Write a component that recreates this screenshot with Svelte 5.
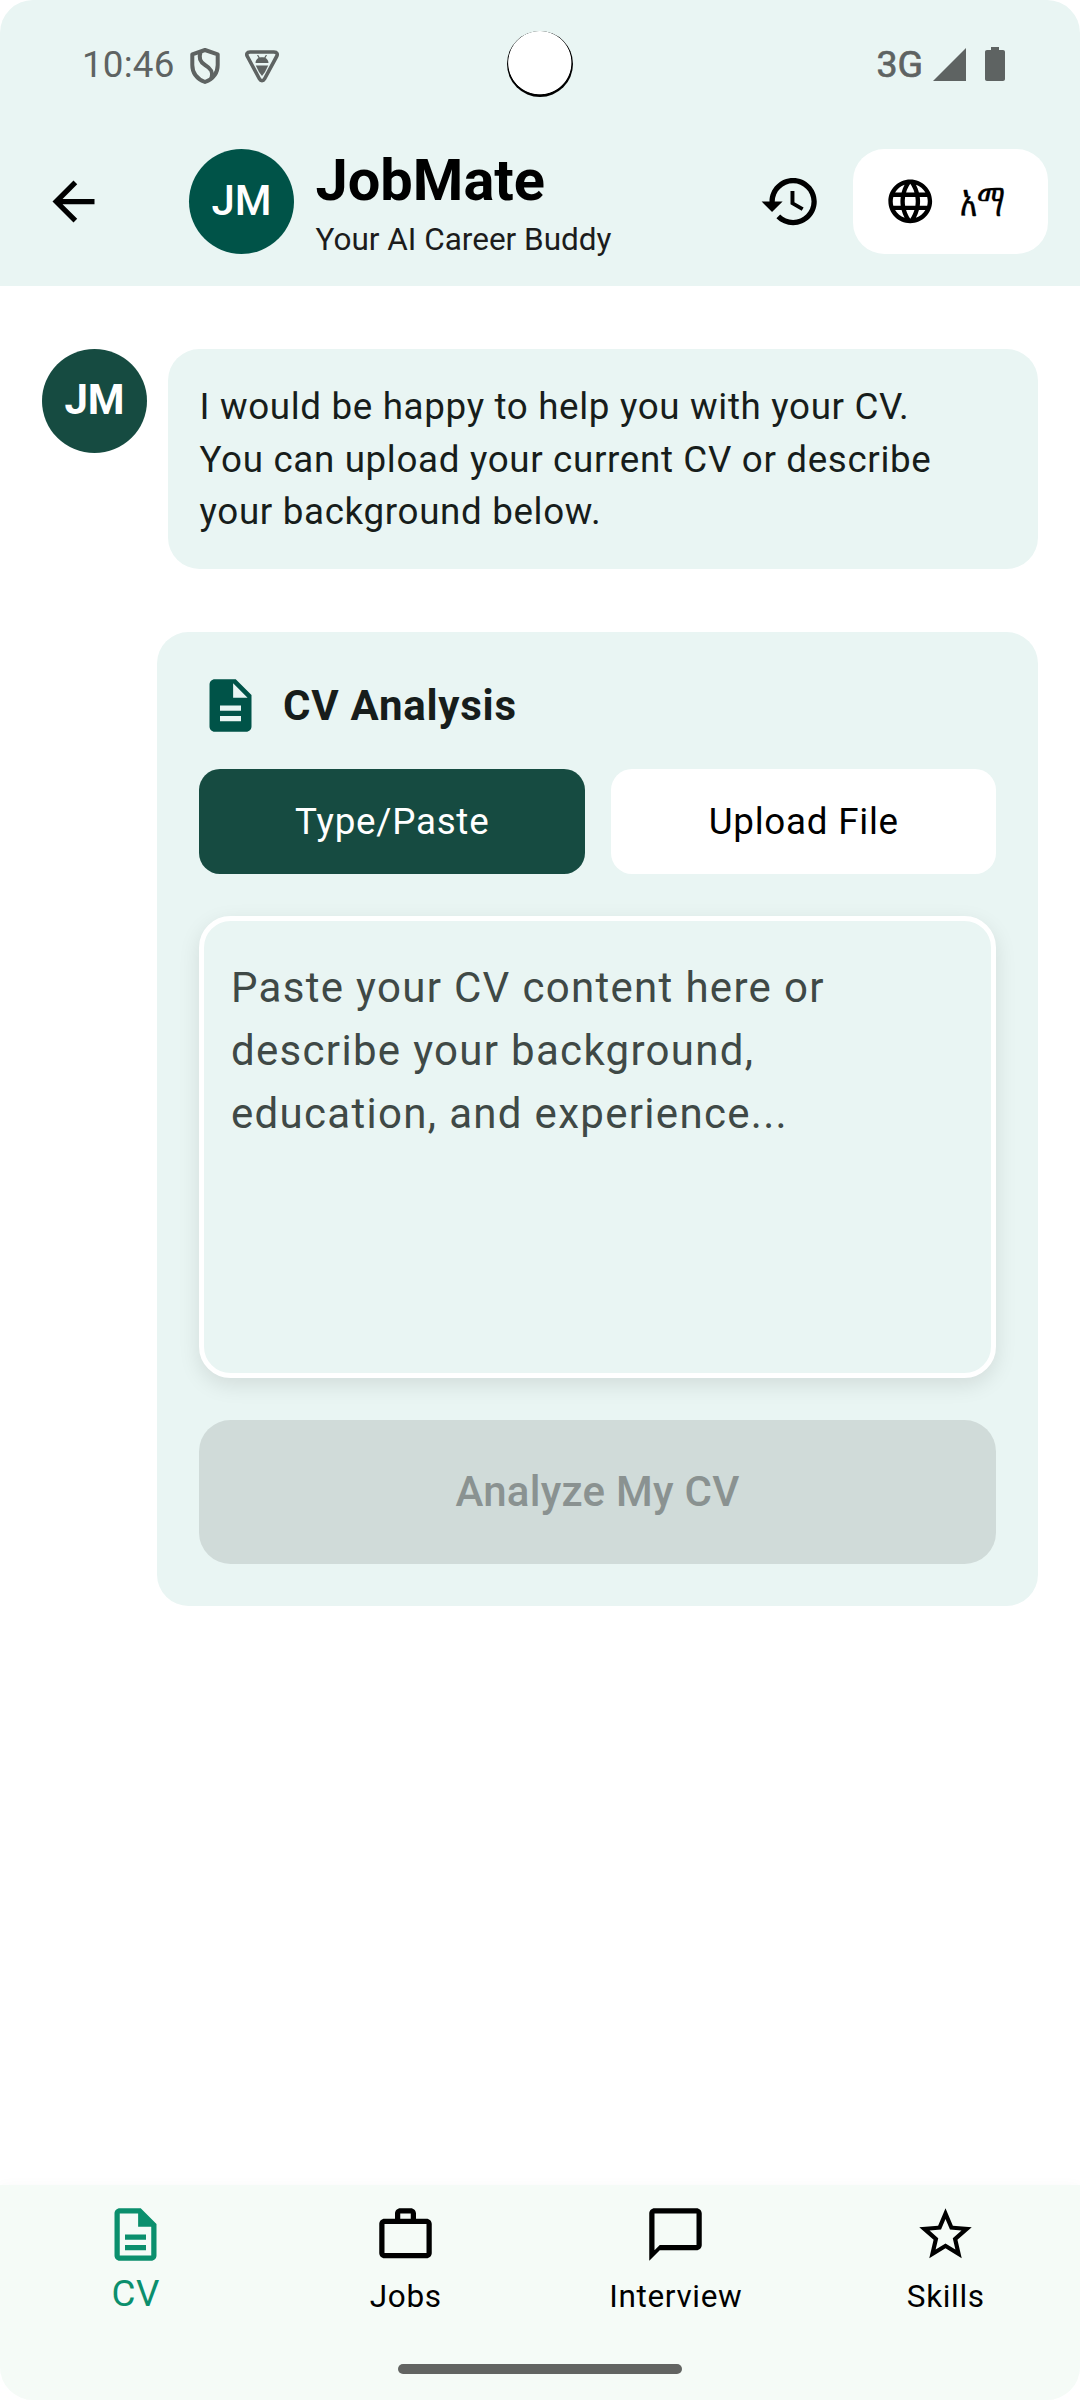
<script>
  const tabs = [
    { id: 'cv', label: 'CV' },
    { id: 'jobs', label: 'Jobs' },
    { id: 'interview', label: 'Interview' },
    { id: 'skills', label: 'Skills' }
  ];
  const icons = {
    cv: 'M8 16h8v2H8zm0-4h8v2H8zm6-10H6c-1.1 0-2 .9-2 2v16c0 1.1.89 2 1.99 2H18c1.1 0 2-.9 2-2V8l-6-6zm4 18H6V4h7v5h5v11z',
    jobs: 'M14 6V4h-4v2h4zM4 8v11h16V8H4zm16-2c1.11 0 2 .89 2 2v11c0 1.11-.89 2-2 2H4c-1.11 0-2-.89-2-2l.01-11c0-1.11.88-2 1.99-2h4V4c0-1.11.89-2 2-2h4c1.11 0 2 .89 2 2v2h4z',
    interview: 'M20 2H4c-1.1 0-2 .9-2 2v18l4-4h14c1.1 0 2-.9 2-2V4c0-1.1-.9-2-2-2zm0 14H6l-2 2V4h16v12z',
    skills: 'M22 9.24l-7.19-.62L12 2 9.19 8.63 2 9.24l5.46 4.73L5.82 21 12 17.27 18.18 21l-1.63-7.03L22 9.24zM12 15.4l-3.76 2.27 1-4.28-3.32-2.88 4.38-.38L12 6.1l1.71 4.04 4.38.38-3.32 2.88 1 4.28L12 15.4z'
  };
  let active = $state('cv');
  let mode = $state('type');
</script>

<div class="screen">
  <header>
    <div class="status">
      <span class="time">10:46</span>
      <svg class="shield" viewBox="0 0 30 36">
        <path d="M15 2 2.3 6.3V17c0 8 5 14 12.700 17 7.700-3 12.700-9 12.700-17V6.300z" />
        <path d="M10.500 4.500c-2 5.500-.5 9.500 4.500 12.500 6 3.500 8.500 7 6.500 13" />
      </svg>
      <svg class="badge" viewBox="0 0 36 34">
        <path class="line" d="M6 3h24c3 0 4 2 2.600 4.500L20.500 30c-1.200 2.200-3.800 2.200-5 0L3.400 7.500C2 5 3 3 6 3z" />
        <path d="M11.500 14c.1-2.400 1.300-4.200 3-5L13 6h1.200l1.600 2.500c1.300-.4 3.100-.4 4.400 0L21.800 6H23l-1.500 3c1.700.8 2.900 2.600 3 5zM11.800 16.500h12.400L21 23l-3 4-3-4z" />
      </svg>
      <span class="spacer"></span>
      <span class="net">3G</span>
      <svg class="signal" viewBox="0 0 33 33"><path d="M33 0v33H0z" /></svg>
      <svg class="battery" viewBox="0 0 20 34"><path d="M6 0h8v3h4c1.200 0 2 .8 2 2v27c0 1.200-.8 2-2 2H2c-1.200 0-2-.8-2-2V5c0-1.200.8-2 2-2h4z" /></svg>
      <div class="camera"></div>
    </div>
    <div class="bar">
      <button class="back" aria-label="Back">
        <svg viewBox="0 0 24 24"><path d="M20 11H7.830l5.590-5.590L12 4l-8 8 8 8 1.410-1.410L7.830 13H20v-2z" /></svg>
      </button>
      <div class="avatar top">JM</div>
      <div class="titles">
        <h1>JobMate</h1>
        <p>Your AI Career Buddy</p>
      </div>
      <svg class="history" viewBox="0 0 24 24"><path d="M13 3c-4.970 0-9 4.030-9 9H1l3.890 3.890.07.14L9 12H6c0-3.870 3.130-7 7-7s7 3.130 7 7-3.130 7-7 7c-1.930 0-3.680-.79-4.940-2.060l-1.420 1.420C8.270 19.990 10.510 21 13 21c4.970 0 9-4.030 9-9s-4.030-9-9-9zm-1 5v5l4.280 2.540.72-1.210-3.500-2.080V8H12z" /></svg>
      <button class="lang">
        <svg viewBox="0 0 24 24"><path d="M11.990 2C6.470 2 2 6.480 2 12s4.470 10 9.990 10C17.520 22 22 17.520 22 12S17.520 2 11.990 2zm6.930 6h-2.950c-.32-1.250-.78-2.450-1.380-3.560 1.840.63 3.370 1.910 4.330 3.560zM12 4.040c.83 1.200 1.480 2.530 1.910 3.960h-3.820c.43-1.430 1.080-2.760 1.910-3.960zM4.260 14C4.100 13.360 4 12.690 4 12s.1-1.360.26-2h3.380c-.08.66-.14 1.320-.14 2s.06 1.340.14 2H4.260zm.82 2h2.950c.32 1.250.78 2.450 1.380 3.560-1.840-.63-3.370-1.900-4.330-3.560zm2.950-8H5.080c.96-1.660 2.490-2.930 4.330-3.560C8.810 5.550 8.350 6.750 8.030 8zM12 19.960c-.83-1.200-1.480-2.530-1.910-3.960h3.820c-.43 1.430-1.080 2.760-1.910 3.960zM14.340 14H9.660c-.09-.66-.16-1.320-.16-2s.07-1.350.16-2h4.680c.09.65.16 1.320.16 2s-.07 1.340-.16 2zm.25 5.560c.6-1.110 1.060-2.310 1.380-3.560h2.950c-.96 1.650-2.490 2.930-4.330 3.560zM16.360 14c.08-.66.14-1.320.14-2s-.06-1.340-.14-2h3.380c.16.64.26 1.310.26 2s-.1 1.360-.26 2h-3.380z" /></svg>
        <span>አማ</span>
      </button>
    </div>
  </header>

  <main>
    <div class="message">
      <div class="avatar">JM</div>
      <p class="bubble">I would be happy to help you with your CV.<br />You can upload your current CV or describe<br />your background below.</p>
    </div>

    <section class="card">
      <div class="heading">
        <svg viewBox="0 0 24 24"><path d="M14 2H6c-1.100 0-1.990.9-1.990 2L4 20c0 1.100.89 2 1.990 2H18c1.100 0 2-.9 2-2V8l-6-6zm2 16H8v-2h8v2zm0-4H8v-2h8v2zm-3-5V3.500L18.500 9H13z" /></svg>
        <h2>CV Analysis</h2>
      </div>
      <div class="modes">
        <button class:on={mode === 'type'} onclick={() => (mode = 'type')}>Type/Paste</button>
        <button class:on={mode === 'upload'} onclick={() => (mode = 'upload')}>Upload File</button>
      </div>
      <div class="field">Paste your CV content here or<br />describe your background,<br />education, and experience...</div>
      <button class="analyze" disabled>Analyze My CV</button>
    </section>
  </main>

  <footer>
    <nav>
      {#each tabs as tab}
        <button class:active={active === tab.id} onclick={() => (active = tab.id)}>
          <svg viewBox="0 0 24 24"><path d={icons[tab.id]} /></svg>
          <span>{tab.label}</span>
        </button>
      {/each}
    </nav>
    <div class="handle"></div>
  </footer>
</div>

<style>
  :global(body) { margin: 0; background: #fff; }
  * { box-sizing: border-box; }
  .screen {
    width: 1080px;
    height: 2400px;
    display: flex;
    flex-direction: column;
    overflow: hidden;
    border-radius: 33px;
    background: #fff;
    font-family: Roboto, 'Noto Sans', sans-serif;
    color: #000;
  }
  button { border: 0; padding: 0; margin: 0; background: none; font: inherit; color: inherit; }
  h1, h2, p { margin: 0; }
  svg { display: block; flex: none; fill: currentColor; }

  header { height: 286px; flex: none; background: #e9f5f3; }
  .status {
    position: relative;
    height: 128px;
    padding: 0 75px 0 82px;
    display: flex;
    align-items: center;
    color: #5e6362;
    font-size: 36.75px;
  }
  .time { width: 108px; letter-spacing: 0.200px; }
  .shield { width: 30px; height: 36px; margin-top: 3px; fill: none; stroke: currentColor; stroke-width: 4; stroke-linejoin: round; }
  .badge { width: 36px; height: 34px; margin: 3px 0 0 24px; }
  .badge .line { fill: none; stroke: currentColor; stroke-width: 3.6; }
  .spacer { flex: 1; }
  .net { font-size: 37.500px; -webkit-text-stroke: 0.700px currentColor; margin-right: 10px; }
  .signal { width: 33px; height: 33px; }
  .battery { width: 20px; height: 34px; margin-left: 19px; }
  .camera {
    position: absolute;
    left: 507px;
    top: 31px;
    width: 66px;
    height: 66px;
    border-radius: 50%;
    background: radial-gradient(circle at 32.800px 31.700px, #fff 31.200px, #000 32px);
  }
  .bar { height: 147px; display: flex; align-items: center; padding: 0 32px 0 10px; }
  .back { width: 126px; height: 126px; display: grid; place-items: center; margin-right: 53px; }
  .back svg, .history { width: 63px; height: 63px; }
  .avatar {
    width: 105px;
    height: 105px;
    flex: none;
    border-radius: 50%;
    background: #164b41;
    color: #fff;
    display: grid;
    place-items: center;
    padding-bottom: 3px;
    font-size: 42px;
    font-weight: 700;
  }
  .avatar.top { background: #005348; font-weight: 500; padding-bottom: 2px; }
  .titles { flex: 1; margin-left: 21.500px; padding-top: 3px; }
  h1 { font-size: 57.750px; line-height: 68px; font-weight: 700; }
  .titles p { font-size: 31.500px; line-height: 42px; color: #1c1c1c; margin-top: 5px; }
  .history { margin-right: 31px; }
  .lang {
    width: 195px;
    height: 105px;
    border-radius: 31.500px;
    background: #fff;
    display: flex;
    align-items: center;
    padding-left: 31px;
    gap: 23px;
    font-size: 31.500px;
    font-weight: 500;
  }
  .lang svg { width: 52.500px; height: 52.500px; }
  .lang span { transform: scale(0.920, 1.420); transform-origin: 0 55%; -webkit-text-stroke: 0.300px #000; }

  main { flex: 1; padding: 63px 42px 0; }
  .message { display: flex; gap: 21px; }
  .message .avatar { height: 104px; }
  .bubble {
    flex: 1;
    height: 220px;
    padding: 32px 31.500px 31px;
    border-radius: 31.500px;
    background: #e9f5f3;
    color: #171d1b;
    font-size: 36.750px;
    line-height: 52.500px;
    letter-spacing: 0.660px;
    white-space: nowrap;
  }
  .card {
    margin: 63px 0 0 115px;
    height: 974px;
    padding: 42px;
    border-radius: 31.500px;
    background: #e9f5f3;
    display: flex;
    flex-direction: column;
  }
  .heading { display: flex; align-items: center; gap: 21px; height: 63px; }
  .heading svg { width: 63px; height: 63px; fill: #005348; }
  h2 { font-size: 42px; font-weight: 700; color: #171d1b; letter-spacing: 0.750px; }
  .modes { display: flex; gap: 26px; margin-top: 32px; }
  .modes button {
    flex: 1;
    height: 105px;
    border-radius: 21px;
    background: #fff;
    font-size: 36.750px;
    letter-spacing: 0.750px;
    padding-left: 1px;
  }
  .modes .on { background: #164b41; color: #fff; }
  .field {
    height: 462px;
    margin-top: 42px;
    padding: 35px 27px;
    border: 5.500px solid #fff;
    border-radius: 31.500px;
    background: #e9f5f3;
    box-shadow: 0 7px 21px rgba(0, 0, 0, 0.100);
    color: #3f4946;
    font-size: 42px;
    line-height: 63px;
    letter-spacing: 1.312px;
    white-space: nowrap;
  }
  .analyze {
    height: 144px;
    margin-top: 42px;
    padding-bottom: 2px;
    border-radius: 31.500px;
    background: #d0dbd9;
    color: #8a9291;
    font-size: 42px;
    font-weight: 500;
    letter-spacing: 0.260px;
  }

  footer { height: 215px; flex: none; background: #f5fbf7; box-shadow: 0 2px 14px rgba(0, 0, 0, 0.035); }
  nav { display: grid; grid-template-columns: repeat(4, 1fr); height: 179px; }
  nav button { display: flex; flex-direction: column; align-items: center; padding-top: 18px; font-size: 31.500px; letter-spacing: 0.660px; }
  nav svg { width: 63px; height: 63px; }
  nav span { line-height: 42px; margin-top: 10px; padding-left: 1.500px; }
  nav .active { color: #0b8f6d; font-size: 36.750px; }
  nav .active span { margin-top: 7px; }
  .handle { width: 284px; height: 10px; border-radius: 5px; background: #626462; margin: 0 auto; }
</style>
